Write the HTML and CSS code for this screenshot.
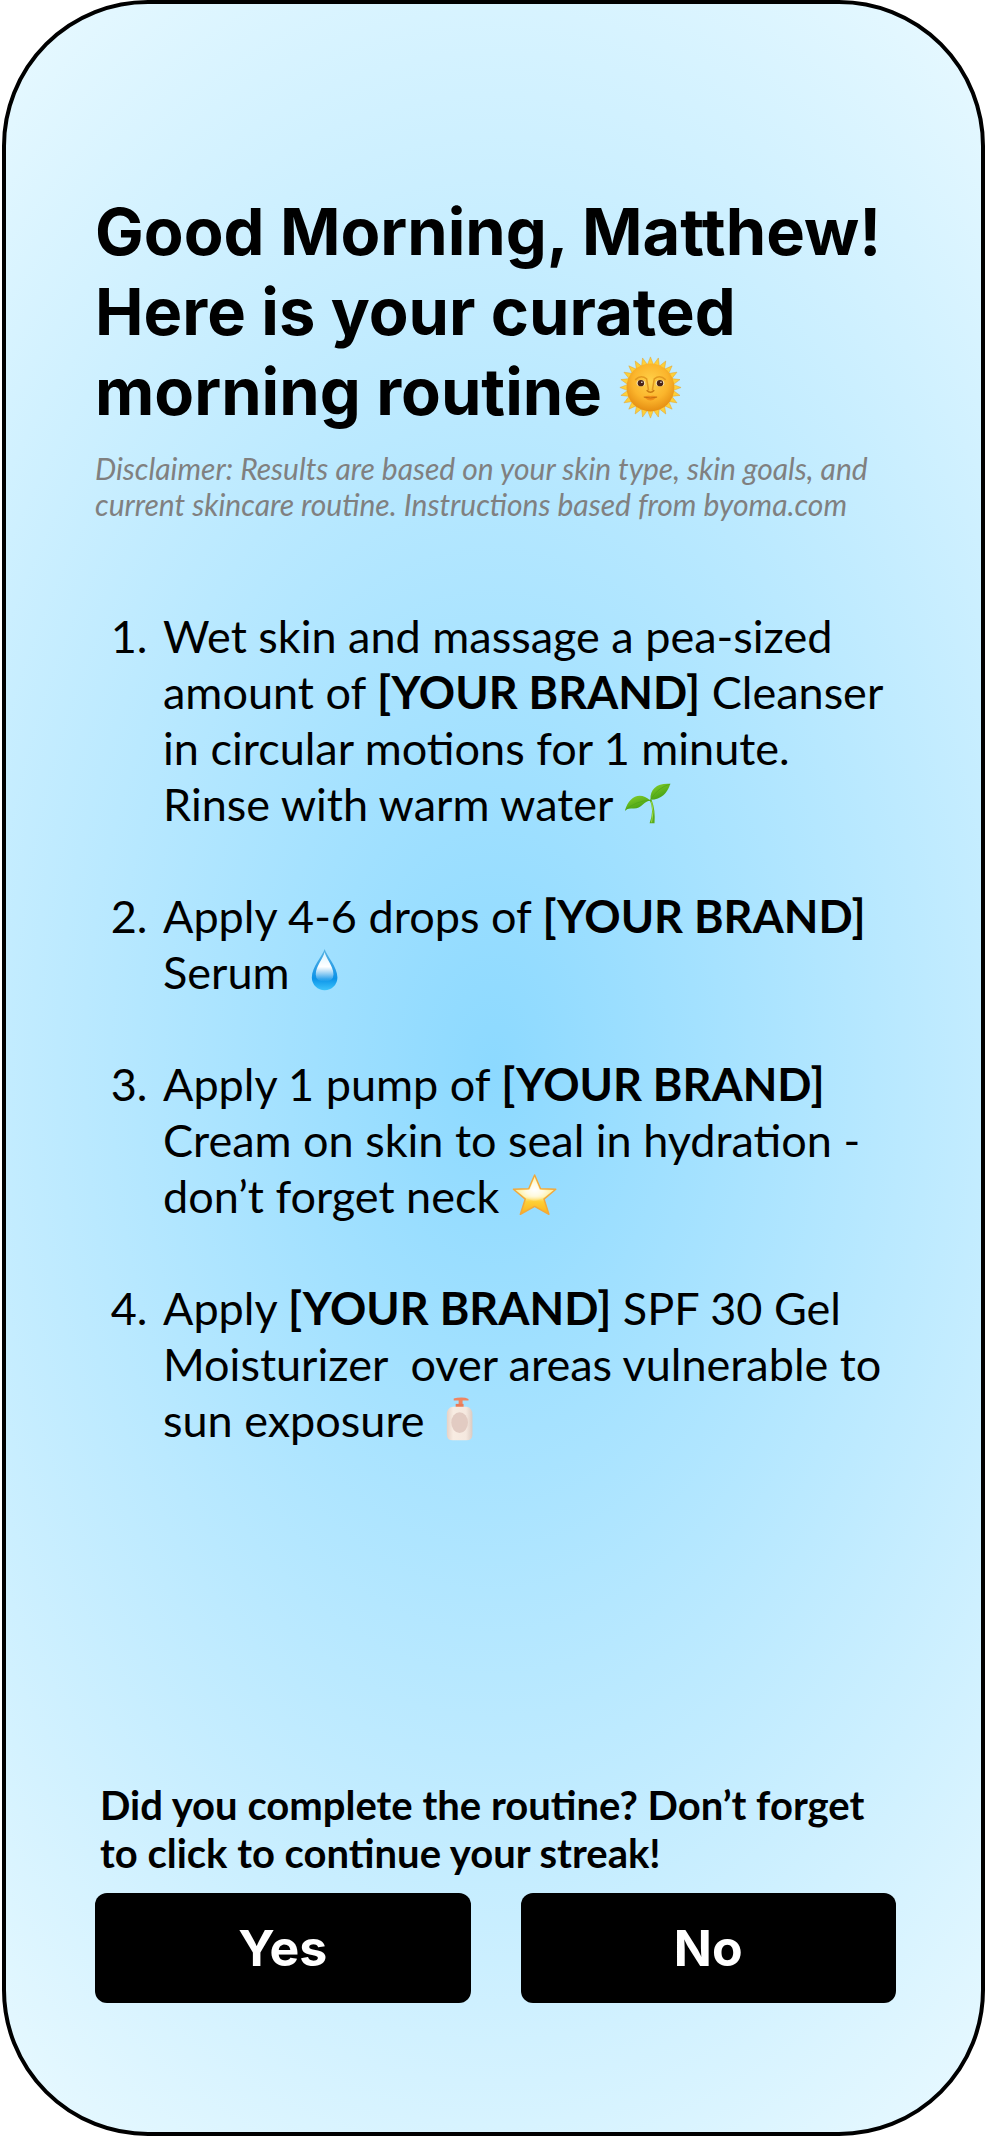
FILE: index.html
```html
<!DOCTYPE html>
<html lang="en">
<head>
<meta charset="utf-8">
<meta name="viewport" content="width=device-width, initial-scale=1">
<title>Morning routine</title>
<link rel="stylesheet" href="styles.css">
</head>
<body>
<main class="screen">
  <h1 class="greeting">Good Morning, Matthew!<br>Here is your curated morning routine <svg class="sun" viewBox="-2 -2 68 68" role="img" aria-label="Sun with face">
    <defs>
      <radialGradient id="sunFace" cx="50%" cy="38%" r="62%"><stop offset="0" stop-color="#ffd24a"/><stop offset="0.6" stop-color="#fbb52c"/><stop offset="1" stop-color="#e58d12"/></radialGradient>
      <path id="ray" d="M29.500 9 33 0 36.500 9Z"/>
      <g id="rays4"><use href="#ray"/><use href="#ray" transform="rotate(90 33 32)"/><use href="#ray" transform="rotate(180 33 32)"/><use href="#ray" transform="rotate(270 33 32)"/></g>
    </defs>
    <g fill="#fdd03a" stroke="#e3a22e" stroke-width="0.5">
      <use href="#rays4"/><use href="#rays4" transform="rotate(15 33 32)"/><use href="#rays4" transform="rotate(30 33 32)"/><use href="#rays4" transform="rotate(45 33 32)"/><use href="#rays4" transform="rotate(60 33 32)"/><use href="#rays4" transform="rotate(75 33 32)"/>
    </g>
    <circle cx="33" cy="32" r="25" fill="url(#sunFace)"/>
    <path d="M17 24q6-6 12-1l2 12M49 24q-6-6-12-1l-2 12" fill="none" stroke="#e39a20" stroke-width="1.6"/>
    <path d="M29 35q4 4 8 0" fill="none" stroke="#c97a10" stroke-width="1.5"/>
    <ellipse cx="23" cy="27.500" rx="4.500" ry="3.300" fill="#f7e3b0"/><ellipse cx="43" cy="27.500" rx="4.500" ry="3.300" fill="#f7e3b0"/>
    <circle cx="23" cy="27.500" r="3.300" fill="#4b2416"/><circle cx="43" cy="27.500" r="3.300" fill="#4b2416"/>
    <circle cx="24" cy="26.500" r="0.800" fill="#fff"/><circle cx="44" cy="26.500" r="0.800" fill="#fff"/>
    <path d="M26 42q4-2 7-1 3-1 7 1-7 7-14 0Z" fill="#f08f1a"/><path d="M26 42q7 2 14 0" fill="none" stroke="#c26e10" stroke-width="1"/>
  </svg></h1>
  <p class="disclaimer">Disclaimer: Results are based on your skin type, skin goals, and current skincare routine. Instructions based from byoma.com</p>

  <ol class="steps">
    <li>Wet skin and massage a pea-sized amount of <strong>[YOUR BRAND]</strong> Cleanser in circular motions for 1 minute. Rinse with warm water <svg class="emoji" viewBox="0 0 48 48" role="img" aria-label="Seedling">
      <defs><linearGradient id="leaf" x1="0" y1="0" x2="0.600" y2="1"><stop offset="0" stop-color="#8ad22c"/><stop offset="1" stop-color="#3f9c12"/></linearGradient></defs>
      <path d="M26 20q5 10 0 24l5 0q1-14-3-24Z" fill="#58ac1c"/>
      <path d="M1 31C5 17 16 11 27 21 20 21 18 29 10 29 6 29 3 29 1 31Z" fill="url(#leaf)"/>
      <path d="M27 20C26 9 34 3 47 4 44 13 38 20 27 20Z" fill="url(#leaf)"/>
      <path d="M1 31Q12 21 27 20.500M27 20Q34 8 47 4" fill="none" stroke="#4c9f18" stroke-width="0.600"/>
      <path d="M28 22q3 10 0 21" fill="none" stroke="#a2dc48" stroke-width="1"/>
    </svg></li>
    <li>Apply 4-6 drops of <strong>[YOUR BRAND]</strong> Serum <svg class="emoji" viewBox="0 0 48 48" role="img" aria-label="Droplet">
      <defs>
        <linearGradient id="drop" x1="0" y1="0" x2="0" y2="1"><stop offset="0" stop-color="#58b4e2"/><stop offset="0.450" stop-color="#2d9fe6"/><stop offset="0.720" stop-color="#0b93e8"/><stop offset="1" stop-color="#3dc4fb"/></linearGradient>
        <linearGradient id="shine" x1="0" y1="0" x2="0" y2="1"><stop offset="0" stop-color="#d8f3ff"/><stop offset="0.500" stop-color="#fff"/><stop offset="1" stop-color="#fff" stop-opacity="0"/></linearGradient>
      </defs>
      <path d="M24 1C22 8 11 19 11 30a13 13 0 0 0 26 0C37 19 26 8 24 1Z" fill="url(#drop)"/>
      <path d="M24 4C23 10 15 18 15 27q0 7 9 7t9-7C33 18 25 10 24 4Z" fill="url(#shine)"/>
    </svg></li>
    <li>Apply 1 pump of <strong>[YOUR BRAND]</strong> Cream on skin to seal in hydration - don’t forget neck <svg class="emoji" viewBox="0 0 48 48" role="img" aria-label="Star">
      <defs>
        <linearGradient id="star" x1="0" y1="0" x2="0" y2="1"><stop offset="0" stop-color="#fff6b0"/><stop offset="0.550" stop-color="#ffef9c"/><stop offset="0.680" stop-color="#ffcf36"/><stop offset="1" stop-color="#fbb21c"/></linearGradient>
        <radialGradient id="glow" cx="50%" cy="50%" r="50%"><stop offset="0" stop-color="#fff"/><stop offset="0.500" stop-color="#fff" stop-opacity="0.700"/><stop offset="1" stop-color="#fff" stop-opacity="0"/></radialGradient>
      </defs>
      <path d="M24 3 30 17 45.500 17.500 33.500 27.500 38.500 43 24 35 9.500 43 14.500 27.500 2.500 17.500 18 17Z" fill="url(#star)" stroke="#f2a93b" stroke-width="1.500" stroke-linejoin="round"/>
      <path d="M24 6 29 18 42 19 32 27 24 30 16 27 6 19 19 18Z" fill="url(#glow)"/>
    </svg></li>
    <li>Apply <strong>[YOUR BRAND]</strong> SPF 30 Gel Moisturizer&nbsp; over areas vulnerable to sun exposure <svg class="emoji" viewBox="0 0 48 48" role="img" aria-label="Lotion bottle">
      <defs><linearGradient id="bottle"><stop offset="0" stop-color="#e5d2c7"/><stop offset="0.250" stop-color="#f8ece2"/><stop offset="0.750" stop-color="#f5e8df"/><stop offset="1" stop-color="#dccbc2"/></linearGradient></defs>
      <path d="M18 2.500q3-1 8-1 4 0 7 1.500v1.500h-6v4h-4V4.500h-5Z" fill="#ee8561"/>
      <path d="M20 8h8v4H20Z" fill="#e77b58"/>
      <path d="M17 11h14q6 1 6 8v20q0 6-6 6H17q-6 0-6-6V19q0-7 6-8Z" fill="url(#bottle)"/>
      <ellipse cx="24" cy="27" rx="8.500" ry="10.500" fill="#e2cbc2"/>
    </svg></li>
  </ol>

  <section class="checkin" aria-labelledby="question">
    <p class="question" id="question">Did you complete the routine? Don’t forget to click to continue your streak!</p>
    <div class="answers">
      <button class="answer" type="button">Yes</button>
      <button class="answer" type="button">No</button>
    </div>
  </section>
</main>
</body>
</html>
```
FILE: styles.css
```css
* { box-sizing: border-box; }

body {
  margin: 0;
  padding-left: 2px;
  background: #fff;
  color: #000;
  font-family: Lato, sans-serif;
}

.screen {
  display: flex;
  flex-direction: column;
  min-height: 100vh;
  padding: 188px 85px 129px 89px;
  border: 4px solid #000;
  border-radius: 146px;
  background: radial-gradient(84% 61% at center, #8cd9ff, #e8f9ff);
}

.greeting {
  margin: 0 0 18px;
  font: 700 65px/80px Inter, sans-serif;
  font-variant-ligatures: none;
}

.sun {
  width: 1em;
  height: 1em;
  vertical-align: -0.07em;
}

.disclaimer {
  margin: 0;
  color: #808080;
  font-size: 30px;
  font-style: italic;
  line-height: 36px;
}

.steps {
  display: flex;
  flex-direction: column;
  gap: 56px;
  margin: 86px 0 0;
  padding: 0 0 0 64px;
  font-size: 45px;
  line-height: 56px;
}

.steps li { padding-left: 4px; }

.emoji {
  width: 1.05em;
  height: 1.05em;
  vertical-align: -0.14em;
}

.checkin { margin-top: auto; }

.question {
  margin: 0 0 16px;
  padding-left: 5px;
  font-size: 40px;
  font-weight: 700;
  line-height: 48px;
}

.answers {
  display: grid;
  grid-template-columns: 1fr 1fr;
  gap: 50px;
}

.answer {
  height: 110px;
  padding: 0;
  border: 0;
  border-radius: 12px;
  background: #000;
  color: #fff;
  font: 700 50px/60px Inter, sans-serif;
}
```
